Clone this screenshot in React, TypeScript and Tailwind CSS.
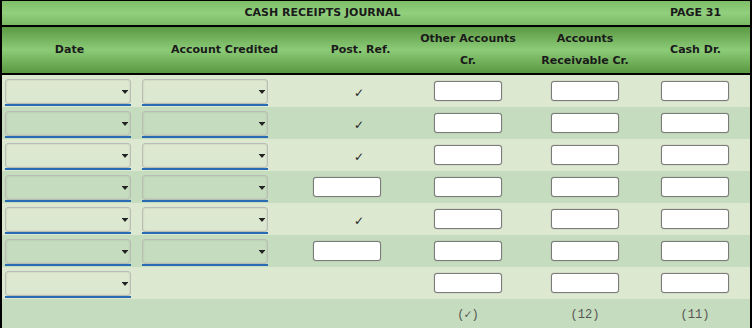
import React from "react";

type Row = { acct: boolean; post: "check" | "input" | "none" };

const rows: Row[] = [
  { acct: true, post: "check" },
  { acct: true, post: "check" },
  { acct: true, post: "check" },
  { acct: true, post: "input" },
  { acct: true, post: "check" },
  { acct: true, post: "input" },
  { acct: false, post: "none" },
];

const grid = "grid grid-cols-[135px_175px_97px_118px_116px_1fr]";

function FakeSelect() {
  return (
    <div className="w-[126px] border-b-2 border-[#2a6cb4]">
      <div className="relative h-[25px] rounded-[3px] border border-[#b9bdb5] shadow-[inset_0_0_2px_rgba(0,0,0,0.15)]">
        <svg
          className="absolute right-[2px] top-[10px]"
          width="6"
          height="4"
          viewBox="0 0 6 4"
        >
          <rect x="0" y="0" width="6" height="1" fill="#222" />
          <path d="M0.5 1 L5.5 1 L3 4 Z" fill="#222" />
        </svg>
      </div>
    </div>
  );
}

function Box() {
  return (
    <div className="h-[20px] w-[68px] rounded-[3px] border border-[#7a7a7a] bg-white shadow-[0_0_1px_rgba(0,0,0,0.4)]" />
  );
}

export default function App() {
  return (
    <div
      className="h-[328px] w-[752px] overflow-hidden bg-white"
      style={{ fontFamily: '"DejaVu Sans", Verdana, sans-serif' }}
    >
      <div className="border-x-2 border-t border-black">
        {/* Title bar */}
        <div
          className={`${grid} h-[24px] items-center text-[11px] font-bold text-[#1a1a1a] bg-[linear-gradient(to_bottom,#7ebd68,#92cf7e_50%,#7ab964)]`}
        >
          <div className="col-span-5 text-center">CASH RECEIPTS JOURNAL</div>
          <div className="pr-[2px] text-center">PAGE 31</div>
        </div>
        <div className="h-[2px] bg-black" />

        {/* Column headings */}
        <div
          className={`${grid} h-[46px] items-center text-center text-[11px] font-bold leading-[22px] text-[#1a1a1a] bg-[linear-gradient(to_bottom,#5b9944,#8ccb77_50%,#5a9841)]`}
        >
          <div>Date</div>
          <div>Account Credited</div>
          <div>Post. Ref.</div>
          <div>
            Other Accounts
            <br />
            Cr.
          </div>
          <div>
            Accounts
            <br />
            Receivable Cr.
          </div>
          <div className="pr-[2px]">Cash Dr.</div>
        </div>
        <div className="h-[2px] bg-black" />

        {/* Body rows */}
        {rows.map((r, i) => (
          <div
            key={i}
            className={`${grid} h-[32px] items-center ${
              i % 2 === 0 ? "bg-[#dde8d0]" : "bg-[#c6dcbe]"
            }`}
          >
            <div className="pl-[3px] pt-[2px]">
              <FakeSelect />
            </div>
            <div className="pl-[5px] pt-[2px]">{r.acct && <FakeSelect />}</div>
            <div className="flex justify-center">
              {r.post === "check" && (
                <span className="pr-[3px] pt-[3px] text-[12px] text-[#222]">✓</span>
              )}
              {r.post === "input" && (
                <div className="w-full pl-[1px]">
                  <Box />
                </div>
              )}
            </div>
            <div className="flex justify-center">
              <Box />
            </div>
            <div className="flex justify-center">
              <Box />
            </div>
            <div className="flex justify-center pr-[3px]">
              <Box />
            </div>
          </div>
        ))}

        {/* Footer */}
        <div
          className={`${grid} h-[30px] items-center bg-[#c6dcbe] pt-[2px] text-center text-[12px] text-[#555]`}
          style={{ fontFamily: '"Liberation Mono", monospace' }}
        >
          <div />
          <div />
          <div />
          <div>(✓)</div>
          <div>(12)</div>
          <div className="pr-[3px]">(11)</div>
        </div>
      </div>
    </div>
  );
}
